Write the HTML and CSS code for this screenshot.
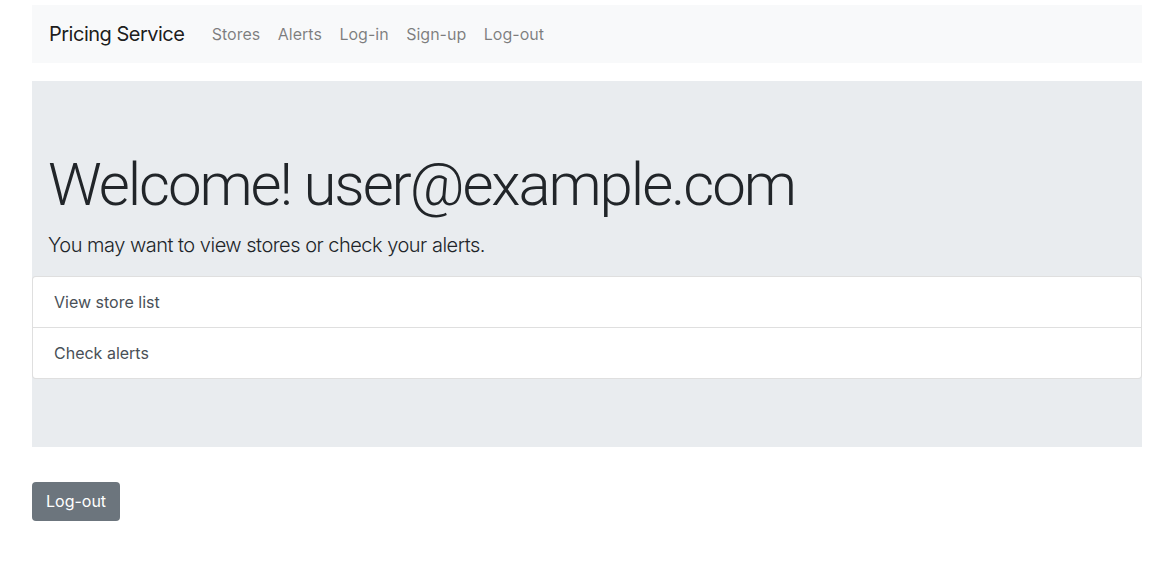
FILE: index.html
```html
<!DOCTYPE html>
<html lang="en">
<head>
<meta charset="utf-8">
<title>Pricing Service</title>
<link rel="stylesheet" href="styles.css">
</head>
<body>
<div class="container">
  <nav class="navbar">
    <a class="brand" href="#">Pricing Service</a>
    <ul class="nav-links">
      <li><a href="#">Stores</a></li>
      <li><a href="#">Alerts</a></li>
      <li><a href="#">Log-in</a></li>
      <li><a href="#">Sign-up</a></li>
      <li><a href="#">Log-out</a></li>
    </ul>
  </nav>
  <div class="jumbotron">
    <h1 class="display">Welcome! user@example.com</h1>
    <p class="lead">You may want to view stores or check your alerts.</p>
    <div class="list-group">
      <a class="list-item" href="#">View store list</a>
      <a class="list-item" href="#">Check alerts</a>
    </div>
  </div>
  <a class="btn" href="#">Log-out</a>
</div>
</body>
</html>
```
FILE: styles.css
```css
* { box-sizing: border-box; }
html, body { margin: 0; padding: 0; }
body {
  font-family: Inter, "Helvetica Neue", Arial, sans-serif;
  font-size: 16px;
  line-height: 1.5;
  color: #212529;
  background: #fff;
}
a { text-decoration: none; }
.container {
  width: 1110px;
  margin: 0 auto;
  padding-top: 5px;
}
.navbar {
  display: flex;
  align-items: center;
  height: 58px;
  padding: 0 16px;
  background: #f8f9fa;
}
.brand {
  font-size: 20px;
  color: rgba(0,0,0,.9);
  margin-right: 18.5px;
  padding-left: 1px;
  letter-spacing: -0.5px;
}
.nav-links {
  display: flex;
  list-style: none;
  margin: 0;
  padding: 0;
}
.nav-links a {
  display: block;
  padding: 8px 8.8px;
  color: rgba(0,0,0,.5);
  font-size: 16px;
}
.jumbotron {
  margin-top: 18px;
  background: #e9ecef;
  padding: 68px 0 68px;
}
.display {
  margin: 0 16px 0;
  font-family: Roboto, Inter, Arial, sans-serif;
  font-size: 60px;
  font-weight: 300;
  line-height: 1.2;
  letter-spacing: -2.1px;
}
.lead {
  margin: 9px 16px 16px;
  font-size: 20px;
  font-weight: 300;
  line-height: 1.5;
  letter-spacing: -0.5px;
}
.list-group {
  background: #fff;
  border: 1px solid rgba(0,0,0,.125);
  border-radius: 4px;
}
.list-item {
  display: block;
  padding: 12px 21px;
  color: #495057;
  font-size: 16px;
  line-height: 26px;
}
.list-item + .list-item {
  border-top: 1px solid rgba(0,0,0,.125);
}
.btn {
  display: inline-block;
  margin-top: 35px;
  padding: 7px 14px;
  background: #6c757d;
  color: #fff;
  border-radius: 4px;
  font-size: 16px;
  line-height: 25px;
}
```
